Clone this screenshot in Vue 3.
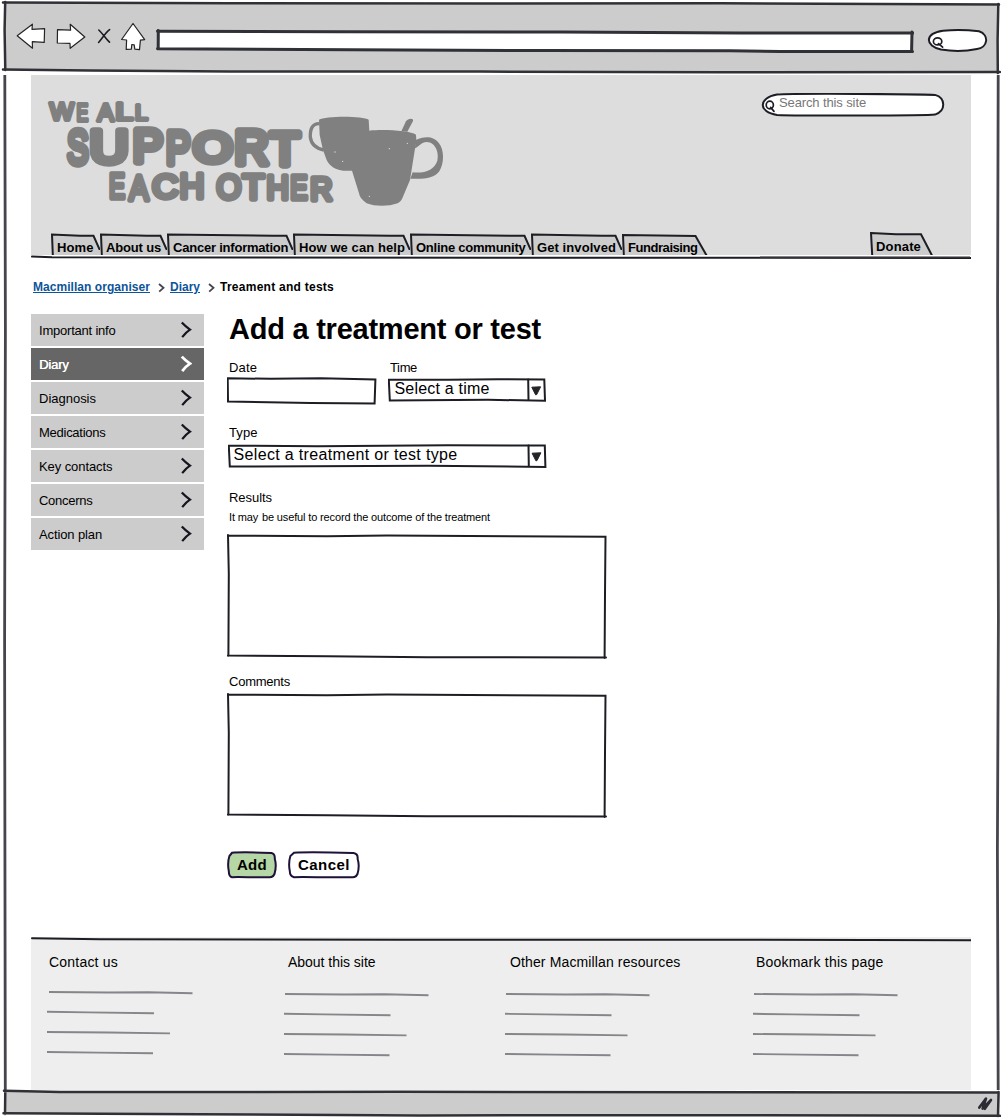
<script setup>
// Tracks a line of text out (or in) so that it spans the given width.
const vTrack = {
  mounted(el, { value }) {
    const range = document.createRange()
    range.selectNodeContents(el)
    const natural = range.getBoundingClientRect().width
    el.style.letterSpacing = (value - natural) / el.textContent.length + 'px'
  }
}

const tabs = [
  { label: 'Home', width: 49, text: 36.7 },
  { label: 'About us', width: 67, text: 55 },
  { label: 'Cancer information', width: 126, text: 115.3 },
  { label: 'How we can help', width: 117, text: 106 },
  { label: 'Online community', width: 121, text: 109.5 },
  { label: 'Get involved', width: 91, text: 79 },
  { label: 'Fundraising', width: 86, text: 69.5, last: true }
]

const menu = [
  { label: 'Important info', text: 76.5 },
  { label: 'Diary', text: 29.5, active: true },
  { label: 'Diagnosis', text: 57 },
  { label: 'Medications', text: 66.5 },
  { label: 'Key contacts', text: 73.5 },
  { label: 'Concerns', text: 53.5 },
  { label: 'Action plan', text: 63 }
]

const columns = [
  { title: 'Contact us', text: 69, width: 238, pad: 17, lead: 0.5, top: 20.5 },
  { title: 'About this site', text: 87.5, width: 221, pad: 18, lead: 3, top: 22.5 },
  { title: 'Other Macmillan resources', text: 170.5, width: 248, pad: 19, lead: 4, top: 22.5 },
  { title: 'Bookmark this page', text: 127.5, width: 217, pad: 17, lead: 2, top: 22.5 }
]

// Advance, left bearing and ink width of each capital, in em.
const metrics = {
  W: [0.944, 0.01, 0.925], E: [0.667, 0.08, 0.54], A: [0.667, 0.003, 0.66], L: [0.556, 0.08, 0.44],
  S: [0.667, 0.045, 0.575], U: [0.722, 0.08, 0.565], P: [0.667, 0.08, 0.535], O: [0.778, 0.05, 0.68],
  R: [0.722, 0.08, 0.61], T: [0.611, 0.02, 0.57], C: [0.722, 0.05, 0.63], H: [0.722, 0.08, 0.56]
}

// Each letter: glyph, left, right, top, bottom.
const sloganSource = [
  { pen: 11.5, letters: [['W', 54, 136, 49, 110], ['E', 138, 178, 53, 114], [' '], ['A', 197, 257, 53, 114], ['L', 258, 311, 53, 112], ['L', 315, 357, 54, 112]] },
  { pen: 22, letters: [['S', 105, 182, 128, 251], ['U', 181, 294, 127, 245], ['P', 308, 403, 124, 243], ['P', 406, 487, 129, 248], ['O', 486, 611, 129, 243], ['R', 614, 723, 129, 249], ['T', 712, 817, 134, 250]] },
  { pen: 16, letters: [['E', 235, 290, 256, 346], ['A', 290, 363, 262, 352], ['C', 364, 448, 262, 349], ['H', 449, 523, 257, 347], [' '], ['O', 556, 637, 262, 351], ['T', 632, 709, 262, 350], ['H', 709, 777, 265, 350], ['E', 779, 837, 265, 350], ['R', 840, 912, 270, 352]] }
]
const slogan = sloganSource.map(({ pen, letters }) => ({
  pen,
  letters: letters.map(([glyph, left, right, top, bottom]) => {
    if (glyph === ' ') return { glyph }
    const [advance, bearing, ink] = metrics[glyph]
    const round = 'SOC'.includes(glyph)
    const stretch = (right - left - pen) / ink
    return {
      glyph,
      x: left + pen / 2 - bearing * stretch,
      y: bottom - pen / 2 - (round ? 2 : 0),
      size: (bottom - top - pen) / (round ? 0.71 : 0.688),
      length: advance * stretch
    }
  })
}))
</script>

<template>
  <div class="window">
    <header class="toolbar">
      <svg class="frame" width="1001" height="75" viewBox="0 0 1001 75">
        <path d="M4 3.2 210 3 420 4.5 640 3.5 998 4.5 998 73 4 70Z" fill="#ccc" />
        <path d="M3 2.5 230 3.2 480 3.6 720 3.3 999 4.6" class="ink wide" />
        <path d="M5.2 2 4.6 30 5.3 70M998.3 4 997.6 40 997.8 73" class="ink wide" />
        <path d="M3 69.5 90 70.6 230 71.4 480 71.6 720 72.2 1000 72" class="ink wide" />
      </svg>
      <svg class="controls" width="134" height="34" viewBox="14 20 134 34">
        <g fill="#fff" stroke="#242428" stroke-width="1.2" stroke-linejoin="round">
          <path d="M17.2 35.8 32.4 24.2 32 29.4 44.6 28.6 44.2 42.4 32.3 41.7 32.5 48.2Z" />
          <path d="M57.5 29.7 70.6 30.2 70.2 24.3 84.8 37 70.2 48.3 70 43.4 57.3 43Z" />
          <path d="M133 23.5 144.7 39.6 140.4 40.2 139.5 49.6 134.8 49.2 134.2 44.8 131.8 44.5 131.3 49.2 126.2 49.4 126.6 40 121.6 39.5Z" />
        </g>
        <path d="M98.8 30C103 34 106 39 109.5 42.2M109.6 29.6C105 33 102 39 98.6 42.5" class="ink cross" />
      </svg>
      <svg class="address" width="758" height="24" viewBox="156 29 758 24">
        <path d="M158.4 31.6 912.4 33 911.8 50.7 158.2 48.8Z" fill="#fff" />
        <path d="M157.5 31.2 340 31.8 560 31.9 740 33 913 33M912 32 911.6 51" class="ink thick" />
        <path d="M158.3 30.5 158.2 49M157.5 48.8 350 49.8 540 50.6 730 50.7 780 51.4 912.5 51.4" class="ink thick" />
      </svg>
      <svg class="quick" width="62" height="24" viewBox="927 29 62 24">
        <path d="M943 30.8C955 29.7 970 30.3 979 31.3 990 35 987.5 48 977 49 965 51.5 950 51 941 49.6 925 46 924 33.5 943 30.8Z" fill="#fff" class="ink" />
        <ellipse cx="937.6" cy="41.4" rx="4.2" ry="3.5" class="lens" />
        <path d="M938.5 43.6 942.6 47.2" class="lens" />
      </svg>
    </header>

    <div class="viewport">
      <svg class="side" width="1001" height="1015" viewBox="0 75 1001 1015" preserveAspectRatio="none">
        <path d="M4.8 72 5.4 330 4.6 640 5.3 1092" class="edge" />
        <path d="M998.2 75 997.6 300 998.4 620 997.4 850 998.2 1092" class="edge" />
      </svg>

      <div class="page">
        <section class="masthead">
          <svg class="logo" width="430" height="130" viewBox="0 0 1290 390" role="img" aria-label="We all support each other">
            <text v-for="(line, i) in slogan" :key="i" class="slogan" :stroke-width="line.pen"><template v-for="(l, j) in line.letters" :key="j"><tspan v-if="l.x" :x="l.x" :y="l.y" :font-size="l.size" :textLength="l.length" lengthAdjust="spacingAndGlyphs">{{ l.glyph }}</tspan><tspan v-else>&nbsp;</tspan></template></text>
            <g fill="#808080">
              <path d="M867 104C885 92 1000 92 1016 104L1018 137C1060 132 1142 137 1158 149L1159 166 1140 285 1116 342C1111 350 1108 352 1103 355 1075 365 1035 365 1010 355 1000 347 990 340 987 325L966 257C920 261 900 245 890 225L879 195 869 150Z" />
              <path d="M1114 139 1128 109C1134 99 1152 99 1149 108L1132 140Z" />
            </g>
            <path d="M869 116C845 115 840 135 841 157 844 180 857 190 881 195" fill="none" stroke="#808080" stroke-width="10" />
            <path d="M1156 166C1180 154 1210 151 1227 175 1243 195 1243 235 1228 259 1212 281 1180 283 1141 281L1148 262C1185 266 1213 254 1222 227 1228 205 1217 171 1190 171 1174 172 1168 184 1155 190Z" fill="#808080" />
            <g fill="#ddd"><circle cx="1078" cy="191" r="2" /><circle cx="1132" cy="175" r="2" /><circle cx="915" cy="201" r="2" /><circle cx="938" cy="229" r="2" /><circle cx="1018" cy="334" r="2" /></g>
          </svg>
          <label class="search">
            <svg class="backing" width="184" height="24" viewBox="761 93 184 24">
              <path d="M777 94.6C790 93.2 920 94 935 94.9 946 98 946 111 935 114.6 925 116 795 115.8 777 114.9 758 112 758 98 777 94.6Z" fill="#fff" class="ink" />
              <ellipse cx="769.8" cy="105" rx="3.6" ry="3.8" class="lens" />
              <path d="M770.6 107.4 774 111.4" class="lens" />
            </svg>
            <span v-track="87">Search this site</span>
          </label>
          <nav class="tabs">
            <a v-for="tab in tabs" :key="tab.label" class="tab" :style="{ width: tab.width + 'px' }">
              <svg class="backing" :width="tab.width" height="23" :viewBox="`0 0 ${tab.width} 23`">
                <template v-if="tab.last">
                  <path :d="`M1.5 23 1 2.4 ${tab.width - 12.5} 3.5 ${tab.width - 1} 23Z`" fill="#ccc" />
                  <path :d="`M1.8 22 1 2 ${tab.width - 12.5} 3 ${tab.width - 1.4} 22.5`" class="ink" />
                </template>
                <template v-else>
                  <path :d="`M1 23 1 2 ${tab.width - 6.5} 3.2 ${tab.width} 15.5V23Z`" fill="#ccc" />
                  <path :d="`M1.8 22 1 1.6 ${tab.width - 20} 2.8 ${tab.width - 6.5} 2.8 ${tab.width - 0.6} 16`" class="ink" />
                </template>
              </svg>
              <span v-track="tab.text">{{ tab.label }}</span>
            </a>
            <a class="tab donate">
              <svg class="backing" width="63" height="24" viewBox="0 0 63 24">
                <path d="M1.6 24 1 1.5 51 2.7 62 24Z" fill="#ccc" />
                <path d="M2.2 23 1 1 26 2.2 51 2.2 62 23.5" class="ink" />
              </svg>
              <span v-track="45">Donate</span>
            </a>
          </nav>
          <svg class="rule" width="940" height="5" viewBox="31 255 940 5">
            <path d="M31 255H971V260H31Z" fill="#fff" />
            <path d="M32 256.6 52 257.2 250 257.5 500 257.8 971 257.9" class="ink" />
            <path d="M760 256.9H970" stroke="#555" />
          </svg>
        </section>

        <div class="crumbs">
          <a v-track="117">Macmillan organiser</a>
          <svg width="7" height="10" viewBox="0 0 7 10"><path d="M1 1 5.5 4.8 1.2 8.7" class="crumb" /></svg>
          <a v-track="30">Diary</a>
          <svg width="7" height="10" viewBox="0 0 7 10"><path d="M1 1 5.5 4.8 1.2 8.7" class="crumb" /></svg>
          <b v-track="114">Treament and tests</b>
        </div>

        <div class="body">
          <nav class="menu">
            <a v-for="item in menu" :key="item.label" :class="{ active: item.active }">
              <span v-track="item.text">{{ item.label }}</span>
              <svg width="12" height="18" viewBox="0 0 12 18"><path d="M1.8 1.6C4.5 4.6 7.5 6.8 10 8.6 7 10.4 4.5 13.2 2.2 16.2" /></svg>
            </a>
          </nav>

          <main>
            <h1 v-track="312">Add a treatment or test</h1>
            <div class="pair">
              <div class="field">
                <label v-track="28">Date</label>
                <svg class="date" width="150" height="28" viewBox="226 377 150 28">
                  <path d="M226.7 378.3 270 378.8 320 378.2 374.4 379.5 373.6 403.4 310 403 227 401.4Z" fill="#fff" class="ink" />
                </svg>
              </div>
              <div class="field">
                <label v-track="27" class="time-label">Time</label>
                <div class="select short">
                  <svg class="backing" width="158" height="24" viewBox="0 0 158 24">
                    <path d="M0.8 1.7 60 1.8 110 1.2 156.3 1.6 157 22.7 100 21.8 1.8 22.4Z" fill="#fff" class="ink" />
                    <path d="M140.2 1.5 140.5 22" class="ink" />
                    <path d="M143.8 9.2 152.6 8.8 148.7 16.6 147.6 16.8Z" fill="#242428" stroke="#242428" />
                  </svg>
                  <span v-track="95">Select a time</span>
                </div>
              </div>
            </div>

            <label v-track="28.5" class="type-label">Type</label>
            <div class="select">
              <svg class="backing" width="319" height="24" viewBox="0 0 319 24">
                <path d="M0.8 1.7 90 2.2 220 1.3 316.8 1.6 317.4 22.9 200 21.7 1.8 22.6Z" fill="#fff" class="ink" />
                <path d="M300.5 1.5 300.8 22" class="ink" />
                <path d="M304.1 9.2 312.9 8.8 309 16.6 307.9 16.8Z" fill="#242428" stroke="#242428" />
              </svg>
              <span v-track="224">Select a treatment or test type</span>
            </div>

            <label v-track="43" class="results-label">Results</label>
            <p class="help"><span v-track="29">It may</span><span v-track="228">be useful to record the outcome of the treatment</span></p>
            <svg class="area" width="380" height="125" viewBox="0 0 380 125">
              <path d="M0.5 1.5 100 2.2 160 1.5 378.5 2.8 378 60 377.6 124M1 1 1.8 40 1.4 122M0.5 121.6 100 122.2 200 123.2 379 123.5" class="ink" />
            </svg>
            <label v-track="61" class="comments-label">Comments</label>
            <svg class="area" width="380" height="125" viewBox="0 0 380 125">
              <path d="M0.5 1.5 100 2.2 160 1.5 378.5 2.8 378 60 377.6 124M1 1 1.8 40 1.4 122M0.5 121.6 100 122.2 200 123.2 379 123.5" class="ink" />
            </svg>

            <div class="actions">
              <button class="add">
                <svg class="backing" width="50" height="28" viewBox="0 0 50 28">
                  <path d="M5 1.8C15 .8 35 1.6 44.5 2 47.5 2.6 48 5 47.8 8 49.4 13 48.6 19 47.5 23 46 26.6 43 26.3 38 26.2 28 26.8 15 25.7 5 26.2 2 25.5 1.8 23 1.8 20 .8 15 .8 10 2.4 5Z" fill="#b5d6a5" />
                </svg>
                <span v-track="30">Add</span>
              </button>
              <button class="cancel">
                <svg class="backing" width="72" height="28" viewBox="0 0 72 28">
                  <path d="M6 1.8C20 .8 50 1.6 65.5 2 69 2.6 70 5 69.6 8 71.4 13 70.6 19 69.5 23 68 26.6 65 26.3 60 26.2 40 26.8 20 25.7 6 26.2 3 25.5 1.8 23 1.8 20 .8 15 .8 10 2.4 5Z" fill="#fff" />
                </svg>
                <span v-track="52">Cancel</span>
              </button>
            </div>
          </main>
        </div>

        <footer>
          <svg class="footline" width="940" height="5" viewBox="31 937 940 5"><path d="M32 938.3 100 939.2 400 939.7 750 939.8 971 940.3" class="ink" /></svg>
          <div class="columns">
            <div v-for="c in columns" :key="c.title" :style="{ width: c.width + 'px', paddingLeft: c.pad + 'px' }">
              <h2 v-track="c.text">{{ c.title }}</h2>
              <svg width="150" height="68" viewBox="0 0 150 68" :style="{ marginLeft: -c.lead + 'px', marginTop: c.top + 'px' }">
                <path d="M1 1 60 1.5 100 1.3 144.5 2.3" class="scribble" />
                <path :d="c.lead < 1 ? 'M-1 20.8 40 21.4 106 22.2M-1 41 60 41.5 122 42.4M-1 61 50 61.6 105 62.2' : 'M0 20.8 40 21.4 106.5 22.2M0 41 60 41.5 122.5 42.4M0 61 50 61.6 105.5 62.2'" class="scribble" />
              </svg>
            </div>
          </div>
        </footer>
      </div>
    </div>

    <div class="status">
      <svg width="1001" height="29" viewBox="0 1089 1001 29">
        <path d="M4 1091 998 1093 998 1116 4 1113Z" fill="#ccc" />
        <path d="M4 1090.8 60 1092 400 1091.8 998 1092.6M5.3 1091 5 1114M3.5 1113.2 200 1114.2 420 1115.4 700 1115.2 1000 1115.8M998.6 1092 998 1116" class="ink wide" />
        <path d="M979.3 1107.6 986 1098.5 982.6 1108.6 991 1100 984.8 1108.8" fill="none" stroke="#2b2a33" stroke-width="2.6" stroke-linejoin="round" stroke-linecap="round" />
      </svg>
    </div>
  </div>
</template>

<style>
body {
  margin: 0;
  background: #fff;
}
</style>

<style scoped>
.window {
  width: 1001px;
  height: 1118px;
  display: flex;
  flex-direction: column;
  overflow: hidden;
  color: #000;
  font: 13px/16px "Liberation Sans", Arial, sans-serif;
}
svg {
  display: block;
  flex: none;
}
.ink {
  stroke: #1d1e24;
  stroke-width: 2;
  stroke-linecap: round;
  stroke-linejoin: miter;
}
path.ink:not([fill]) {
  fill: none;
}
.ink.cross {
  stroke-width: 1.6;
}
.ink.wide {
  stroke: #303136;
  stroke-width: 2.5;
}
.ink.thick {
  stroke: #303136;
  stroke-width: 3;
}
.lens {
  fill: none;
  stroke: #1d1e24;
  stroke-width: 1.7;
  stroke-linecap: round;
}
.edge {
  fill: none;
  stroke: #45464b;
  stroke-width: 2.8;
}
.toolbar {
  position: relative;
  display: flex;
  align-items: flex-start;
  height: 75px;
  box-sizing: border-box;
  padding-left: 14px;
}
.frame,
.side,
.backing {
  position: absolute;
  top: 0;
  left: 0;
}
.controls,
.address,
.quick {
  position: relative;
}
.controls {
  margin-top: 20px;
}
.address {
  margin: 29px 0 0 8px;
}
.quick {
  margin: 29px 0 0 13px;
}
.viewport {
  position: relative;
  height: 1014px;
}
.page {
  position: relative;
  width: 940px;
  height: 1015px;
  margin-left: 31px;
  display: flex;
  flex-direction: column;
}
.masthead {
  display: flex;
  flex-wrap: wrap;
  align-content: flex-start;
  justify-content: space-between;
  height: 185px;
  background: #ddd;
}
.logo {
  margin: 10px 0 0 -1px;
}
.slogan {
  font-family: "Liberation Sans", Arial, sans-serif;
  fill: #808080;
  stroke: #808080;
  stroke-linejoin: round;
}
.search {
  position: relative;
  width: 184px;
  height: 24px;
  margin: 18px 26px 0 0;
  color: #777;
}
.search span {
  position: relative;
  display: block;
  margin: 2px 0 0 18px;
  white-space: nowrap;
}
.tabs {
  display: flex;
  width: 100%;
  height: 22px;
  margin-top: 18px;
  padding-left: 20px;
}
.tab {
  position: relative;
  flex: none;
  height: 22px;
  font-weight: bold;
  white-space: nowrap;
}
.tab span {
  position: relative;
  display: block;
  padding: 7px 0 0 6px;
}
.tab.donate {
  width: 63px;
  margin: -1px 38px 0 auto;
}
.rule {
  position: relative;
}
.crumbs {
  display: flex;
  align-items: center;
  height: 16px;
  margin: 19px 0 0 2px;
  font-size: 12px;
  font-weight: bold;
  white-space: nowrap;
}
.crumbs a {
  color: #0d5499;
  text-decoration: underline;
}
.crumbs svg {
  margin: 2px 5px 0 8px;
}
.crumb {
  fill: none;
  stroke: #45454d;
  stroke-width: 1.8;
}
.body {
  display: flex;
  height: 626px;
  margin-top: 16px;
}
.menu {
  display: flex;
  flex-direction: column;
  gap: 2px;
  width: 173px;
  padding-top: 3px;
}
.menu a {
  display: flex;
  align-items: center;
  justify-content: space-between;
  height: 32px;
  padding: 0 12px 0 8px;
  background: #ccc;
  white-space: nowrap;
}
.menu path {
  fill: none;
  stroke: #15151f;
  stroke-width: 2.2;
}
.menu span {
  position: relative;
  top: 1px;
}
.menu .active {
  background: #666;
  color: #fff;
  text-shadow: 0.4px 0 #fff;
}
.menu .active path {
  stroke: #fff;
  stroke-width: 2.8;
}
main {
  display: flex;
  flex-direction: column;
  align-items: flex-start;
  margin-left: 24px;
}
h1 {
  margin: 0 0 0 1px;
  font-size: 29px;
  line-height: 36px;
  white-space: nowrap;
}
label {
  display: block;
  margin-left: 1px;
  height: 16px;
  white-space: nowrap;
}
.time-label {
  margin-left: 2px;
}
.pair {
  display: flex;
  gap: 11px;
  height: 65px;
  padding-top: 13px;
  box-sizing: border-box;
}
.date {
  margin: 1px 0 0 -1px;
}
.select {
  position: relative;
  width: 319px;
  height: 24px;
  margin-top: 3px;
  font-size: 16px;
}
.select.short {
  width: 158px;
  margin-top: 2px;
}
.select.short span {
  padding-left: 6.5px;
}
.select span {
  position: relative;
  display: block;
  padding: 3px 0 0 5.5px;
  white-space: nowrap;
}
.type-label {
  margin-top: 13px;
}
.results-label {
  margin-top: 22px;
}
.help {
  display: flex;
  gap: 4px;
  margin: 3px 0 0 1px;
  font-size: 11px;
  white-space: nowrap;
}
.area {
  margin: 9px 0 0 -1px;
}
.comments-label {
  margin-top: 15px;
}
.comments-label + .area {
  margin-top: 3px;
}
.actions {
  display: flex;
  gap: 11px;
  margin: 33px 0 0 -1px;
}
button {
  position: relative;
  height: 28px;
  padding: 0;
  border: 0;
  background: none;
  color: #000;
  text-align: left;
  font: bold 15px/26px "Liberation Sans", Arial, sans-serif;
}
button path {
  stroke: #1f1238;
  stroke-width: 2;
}
button span {
  position: relative;
  display: block;
  padding-left: 10px;
}
.add {
  width: 50px;
}
.cancel {
  width: 72px;
}
footer {
  width: 940px;
  flex: 1;
  background: #eee;
}
.columns {
  display: flex;
  padding-top: 12px;
}
.columns > div {
  box-sizing: border-box;
}
h2 {
  margin: 0 0 0 1px;
  font-size: 14px;
  line-height: 16px;
  font-weight: normal;
  white-space: nowrap;
}
.columns svg {
  overflow: visible;
}
.scribble {
  fill: none;
  stroke: #85868a;
  stroke-width: 1.9;
}
.status {
  position: relative;
  height: 29px;
}
</style>
